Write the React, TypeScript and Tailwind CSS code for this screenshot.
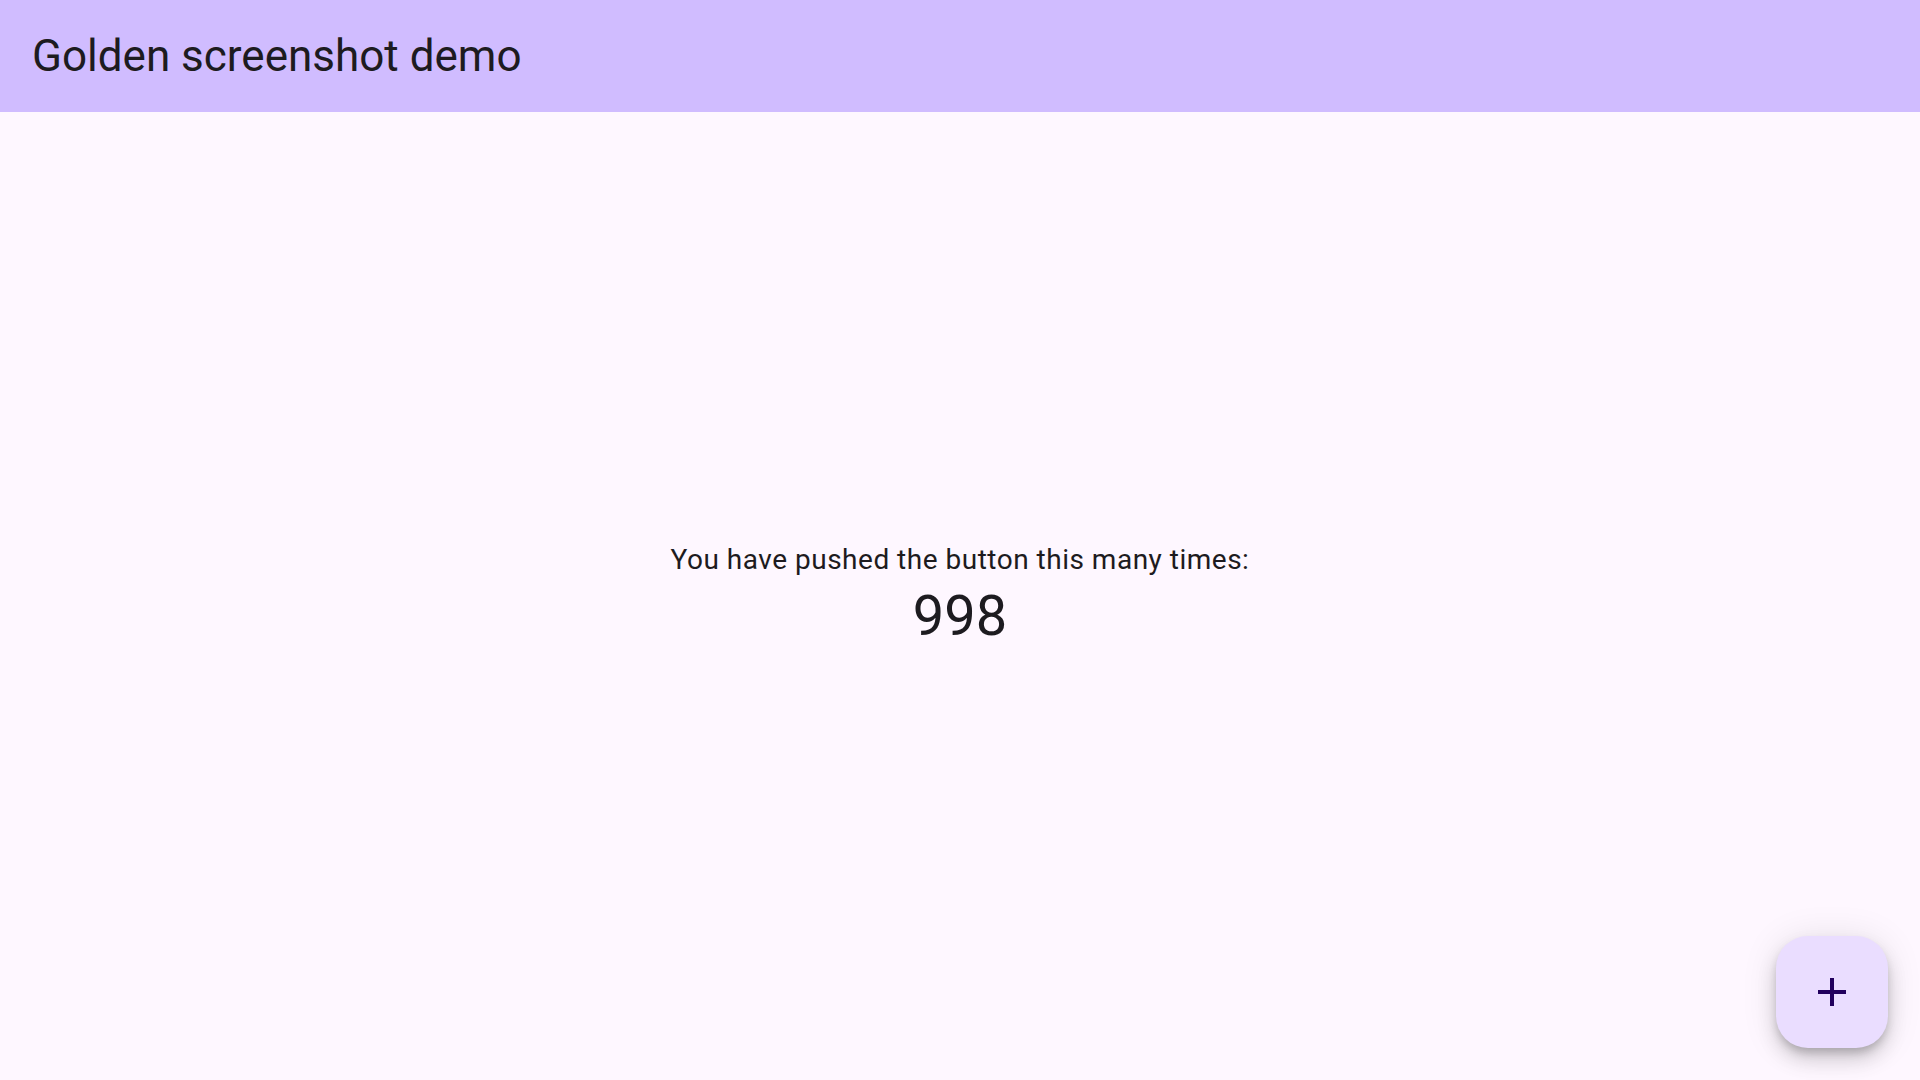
import React from "react";

export default function App() {
  return (
    <div
      className="relative flex h-[1080px] w-[1920px] flex-col overflow-hidden bg-[#FEF7FF] text-[#1D1B20]"
      style={{ fontFamily: "Roboto, 'Noto Sans', sans-serif" }}
    >
      <header className="flex h-[112px] shrink-0 items-center bg-[#D0BCFF] px-[32px]">
        <h1 className="text-[44px] font-normal leading-[56px]">Golden screenshot demo</h1>
      </header>
      <main className="flex flex-1 flex-col items-center justify-center">
        <div className="text-[28px] leading-[40px] tracking-[0.5px]">
          You have pushed the button this many times:
        </div>
        <div className="text-[56px] leading-[72px]">998</div>
      </main>
      <button
        className="absolute bottom-[32px] right-[32px] flex h-[112px] w-[112px] items-center justify-center rounded-[32px] bg-[#EADDFF] shadow-[0_12px_20px_rgba(0,0,0,0.14),0_2px_36px_rgba(0,0,0,0.1),0_6px_10px_-2px_rgba(0,0,0,0.2)]"
        aria-label="Increment"
      >
        <svg width="48" height="48" viewBox="0 0 24 24" fill="#21005D">
          <path d="M19 13h-6v6h-2v-6H5v-2h6V5h2v6h6v2z" />
        </svg>
      </button>
    </div>
  );
}
